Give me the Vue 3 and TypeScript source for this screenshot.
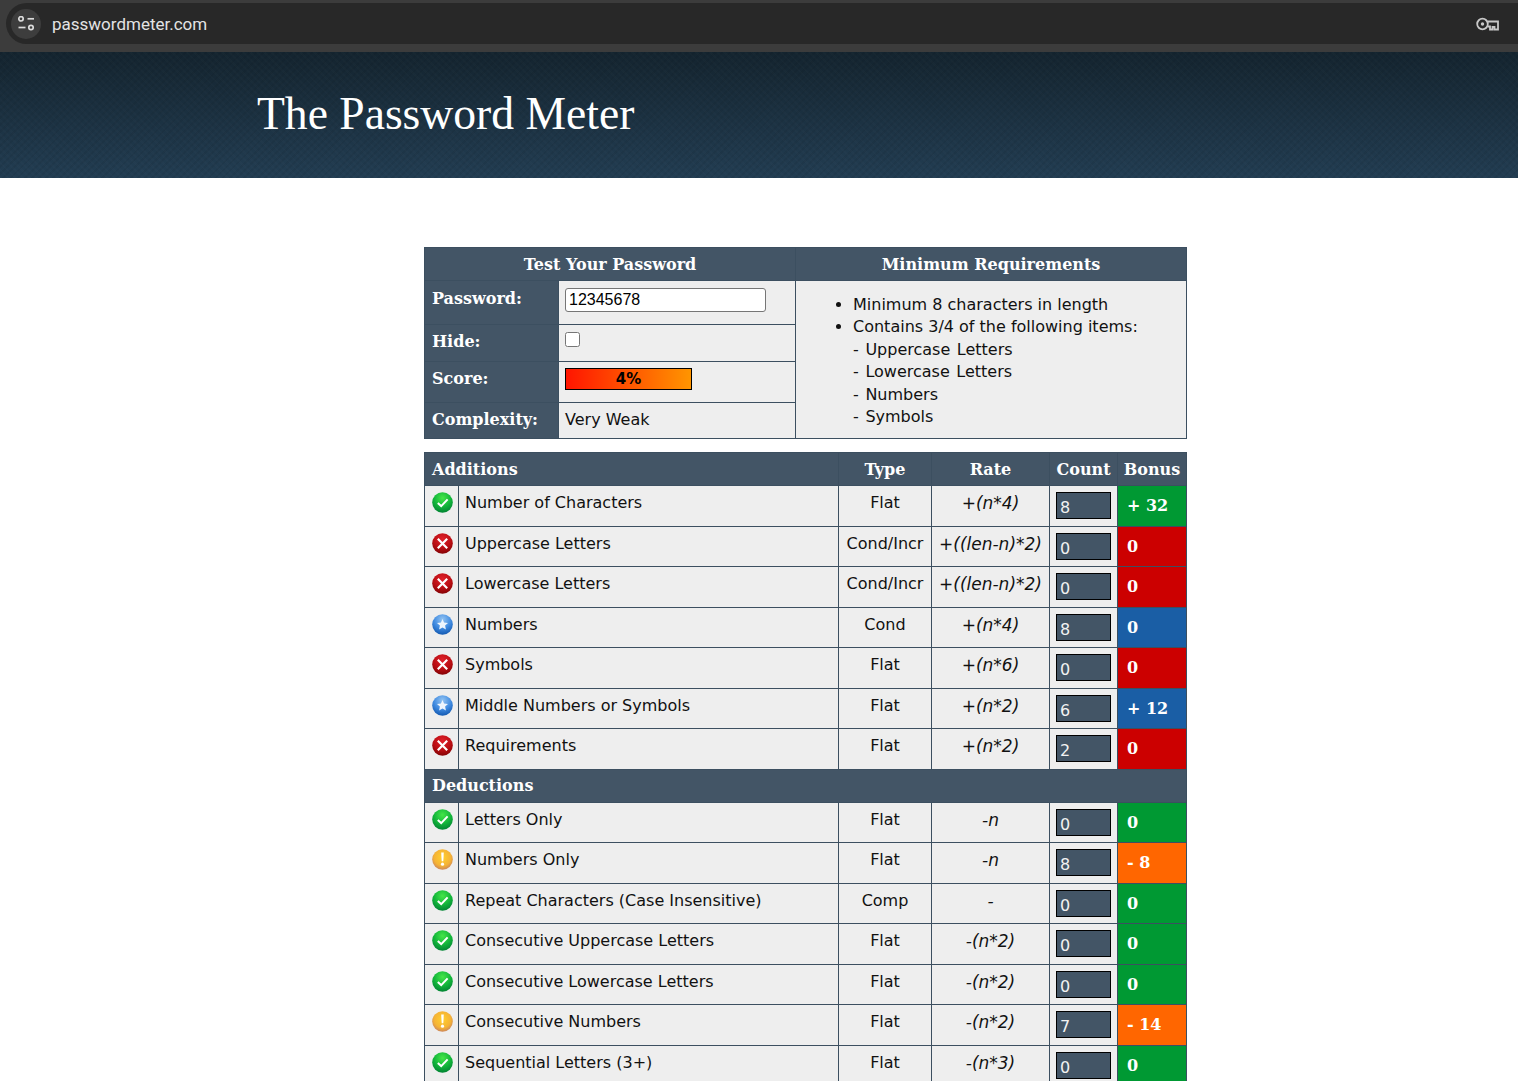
<script setup lang="ts">
type Status = 'pass' | 'fail' | 'warn' | 'star';
type Tone = 'green' | 'red' | 'blue' | 'orange';

interface Row {
  status: Status;
  name: string;
  type: string;
  rate: string;
  count: number;
  bonus: string;
  tone: Tone;
}

const additions: Row[] = [
  { status: 'pass', name: 'Number of Characters', type: 'Flat', rate: '+(n*4)', count: 8, bonus: '+ 32', tone: 'green' },
  { status: 'fail', name: 'Uppercase Letters', type: 'Cond/Incr', rate: '+((len-n)*2)', count: 0, bonus: '0', tone: 'red' },
  { status: 'fail', name: 'Lowercase Letters', type: 'Cond/Incr', rate: '+((len-n)*2)', count: 0, bonus: '0', tone: 'red' },
  { status: 'star', name: 'Numbers', type: 'Cond', rate: '+(n*4)', count: 8, bonus: '0', tone: 'blue' },
  { status: 'fail', name: 'Symbols', type: 'Flat', rate: '+(n*6)', count: 0, bonus: '0', tone: 'red' },
  { status: 'star', name: 'Middle Numbers or Symbols', type: 'Flat', rate: '+(n*2)', count: 6, bonus: '+ 12', tone: 'blue' },
  { status: 'fail', name: 'Requirements', type: 'Flat', rate: '+(n*2)', count: 2, bonus: '0', tone: 'red' },
];

const deductions: Row[] = [
  { status: 'pass', name: 'Letters Only', type: 'Flat', rate: '-n', count: 0, bonus: '0', tone: 'green' },
  { status: 'warn', name: 'Numbers Only', type: 'Flat', rate: '-n', count: 8, bonus: '- 8', tone: 'orange' },
  { status: 'pass', name: 'Repeat Characters (Case Insensitive)', type: 'Comp', rate: '-', count: 0, bonus: '0', tone: 'green' },
  { status: 'pass', name: 'Consecutive Uppercase Letters', type: 'Flat', rate: '-(n*2)', count: 0, bonus: '0', tone: 'green' },
  { status: 'pass', name: 'Consecutive Lowercase Letters', type: 'Flat', rate: '-(n*2)', count: 0, bonus: '0', tone: 'green' },
  { status: 'warn', name: 'Consecutive Numbers', type: 'Flat', rate: '-(n*2)', count: 7, bonus: '- 14', tone: 'orange' },
  { status: 'pass', name: 'Sequential Letters (3+)', type: 'Flat', rate: '-(n*3)', count: 0, bonus: '0', tone: 'green' },
];

const sections = [
  { title: 'Additions', rows: additions, head: true },
  { title: 'Deductions', rows: deductions, head: false },
];

const requirements = ['Uppercase Letters', 'Lowercase Letters', 'Numbers', 'Symbols'];
</script>

<template>
  <div class="page">
    <div class="browser-bar">
      <div class="omnibox">
        <span class="site-btn">
          <svg width="20" height="16" viewBox="0 0 20 16" fill="none" stroke="#dcdcdc" stroke-width="1.7">
            <circle cx="5" cy="2.8" r="2.2" />
            <path d="M11.5 2.8h6.5" />
            <path d="M2.5 11.5h7" />
            <circle cx="15" cy="11.5" r="2.2" />
          </svg>
        </span>
        <span class="url">passwordmeter.com</span>
        <svg class="key" width="24" height="14" viewBox="0 0 24 14" fill="none" stroke="#c8c8c8" stroke-width="1.8">
          <circle cx="7.5" cy="7" r="5.3" />
          <circle cx="7.5" cy="7" r="1.7" fill="#c8c8c8" stroke="none" />
          <path d="M12.5 4.5H23V12.5H19.5V10H17.5V12.5H15V9.5H12.5" />
        </svg>
      </div>
    </div>

    <header class="banner">
      <h1>The Password Meter</h1>
    </header>

    <main class="content">
      <table class="test-table">
        <colgroup>
          <col class="c-label" />
          <col class="c-field" />
          <col />
        </colgroup>
        <tbody>
          <tr class="head-row">
            <th colspan="2">Test Your Password</th>
            <th>Minimum Requirements</th>
          </tr>
          <tr class="r-pass">
            <th class="label">Password:</th>
            <td><input class="pass-input" type="text" value="12345678" /></td>
            <td class="req-cell" rowspan="4">
              <ul>
                <li>Minimum 8 characters in length</li>
                <li>Contains 3/4 of the following items:</li>
              </ul>
              <div v-for="item in requirements" :key="item" class="req-item">- {{ item }}</div>
            </td>
          </tr>
          <tr class="r-hide">
            <th class="label">Hide:</th>
            <td><input class="hide-box" type="checkbox" /></td>
          </tr>
          <tr class="r-score">
            <th class="label">Score:</th>
            <td><div class="score-bar">4%</div></td>
          </tr>
          <tr class="r-complexity">
            <th class="label">Complexity:</th>
            <td>Very Weak</td>
          </tr>
        </tbody>
      </table>

      <table class="score-table">
        <colgroup>
          <col class="c-icon" />
          <col />
          <col class="c-type" />
          <col class="c-rate" />
          <col class="c-count" />
          <col class="c-bonus" />
        </colgroup>
        <tbody v-for="section in sections" :key="section.title">
          <tr class="head-row">
            <th v-if="!section.head" colspan="6" class="left">{{ section.title }}</th>
            <template v-else>
              <th colspan="2" class="left">{{ section.title }}</th>
              <th>Type</th>
              <th>Rate</th>
              <th>Count</th>
              <th>Bonus</th>
            </template>
          </tr>
          <tr v-for="row in section.rows" :key="row.name" class="data-row">
            <td class="icon-cell">
              <svg class="status" width="21" height="21" viewBox="0 0 21 21">
                <defs>
                  <radialGradient id="g-pass" cx="50%" cy="28%" r="75%">
                    <stop offset="0" stop-color="#45e648" />
                    <stop offset="0.55" stop-color="#12b53a" />
                    <stop offset="1" stop-color="#017f33" />
                  </radialGradient>
                  <radialGradient id="g-fail" cx="50%" cy="28%" r="75%">
                    <stop offset="0" stop-color="#e0202a" />
                    <stop offset="0.6" stop-color="#b80d12" />
                    <stop offset="1" stop-color="#7e0204" />
                  </radialGradient>
                  <radialGradient id="g-warn" cx="50%" cy="40%" r="62%">
                    <stop offset="0" stop-color="#ffd02e" />
                    <stop offset="0.65" stop-color="#f5b335" />
                    <stop offset="1" stop-color="#c9825c" />
                  </radialGradient>
                  <radialGradient id="g-star" cx="50%" cy="25%" r="78%">
                    <stop offset="0" stop-color="#92c3f2" />
                    <stop offset="0.55" stop-color="#3f8ae0" />
                    <stop offset="1" stop-color="#0f55ad" />
                  </radialGradient>
                </defs>
                <circle cx="10.5" cy="10.5" r="10.3" :fill="`url(#g-${row.status})`" />
                <path v-if="row.status === 'pass'" d="M5.8 11l3.4 3.1L15.6 7.4" fill="none" stroke="#fff" stroke-width="2" />
                <path v-else-if="row.status === 'fail'" d="M5.8 5.8l9.4 9.4M15.2 5.8l-9.4 9.4" fill="none" stroke="#fff" stroke-width="2.2" />
                <template v-else-if="row.status === 'warn'">
                  <path d="M9.2 3.6h2.6l-.5 8.6H9.7z" fill="#fff" />
                  <circle cx="10.5" cy="15.2" r="1.6" fill="#fff" />
                </template>
                <path v-else d="M10.5 5l1.6 3.6 3.9.4-2.9 2.6.8 3.9-3.4-2-3.4 2 .8-3.9L5 9l3.9-.4z" fill="#eef5fd" />
              </svg>
            </td>
            <td class="name-cell">{{ row.name }}</td>
            <td class="center">{{ row.type }}</td>
            <td class="center rate">{{ row.rate }}</td>
            <td class="count-cell"><input class="count" type="text" readonly :value="row.count" /></td>
            <td class="bonus" :class="row.tone">{{ row.bonus }}</td>
          </tr>
        </tbody>
      </table>
    </main>
  </div>
</template>

<style>
html,
body {
  margin: 0;
  height: 100%;
  overflow: hidden;
  background: #fff;
}
</style>

<style scoped>
.page {
  height: 1081px;
  overflow: hidden;
  font-family: "DejaVu Sans", Verdana, sans-serif;
  font-size: 16px;
  color: #111;
}

.browser-bar {
  height: 52px;
  box-sizing: border-box;
  padding-top: 3px;
  background: #3c3c3c;
}

.omnibox {
  height: 41px;
  margin-left: 6px;
  padding: 0 19px 0 5px;
  display: flex;
  align-items: center;
  background: #282828;
  border-radius: 21px 0 0 21px;
}

.site-btn {
  width: 30px;
  height: 30px;
  border-radius: 50%;
  background: #3d3d3d;
  display: flex;
  align-items: center;
  justify-content: center;
}

.url {
  margin-left: 11px;
  font-family: Roboto, "Liberation Sans", sans-serif;
  font-size: 17px;
  color: #e3e3e3;
}

.key {
  margin-left: auto;
}

.banner {
  height: 126px;
  box-sizing: border-box;
  padding: 36px 0 0 257px;
  background:
    repeating-linear-gradient(45deg, rgba(255, 255, 255, 0.012) 0 2px, transparent 2px 5px),
    repeating-linear-gradient(-45deg, rgba(0, 0, 0, 0.05) 0 2px, transparent 2px 5px),
    linear-gradient(#14242f, #223d52);
}

.banner h1 {
  margin: 0;
  font-family: "Liberation Serif", serif;
  font-weight: 400;
  font-size: 45.6px;
  line-height: 52px;
  color: #fff;
}

.content {
  width: 763px;
  margin: 69px 0 0 424px;
}

table {
  width: 763px;
  table-layout: fixed;
  border-collapse: collapse;
  border-spacing: 0;
}

.score-table {
  margin-top: 13px;
}

th,
td {
  box-sizing: border-box;
  padding: 0;
  border: 1px solid #3c4f60;
  vertical-align: top;
  background: #eeeeee;
}

th {
  font-family: "DejaVu Serif", serif;
  font-size: 16px;
  font-weight: 700;
  color: #fff;
  background: #435566;
}

.head-row th {
  height: 33px;
  vertical-align: middle;
  text-align: center;
}

.head-row th.left {
  text-align: left;
  padding-left: 7px;
}

.label {
  text-align: left;
  padding: 7px 0 0 7px;
}

.test-table td {
  padding: 7px 6px 0;
}

.c-label {
  width: 134px;
}

.c-field {
  width: 237px;
}

.r-pass th,
.r-pass td {
  height: 44px;
}

.r-pass th {
  padding-top: 8px;
}

.r-hide th,
.r-hide td {
  height: 37px;
}

.r-score th,
.r-score td {
  height: 41px;
}

.test-table .r-score td {
  padding-top: 6px;
}

.r-complexity th,
.r-complexity td {
  height: 36px;
}

.pass-input {
  display: block;
  box-sizing: border-box;
  width: 201px;
  height: 24px;
  padding: 1px 3px;
  border: 1px solid #767676;
  border-radius: 3px;
  font-family: "Liberation Sans", Arial, sans-serif;
  font-size: 16px;
  color: #000;
  background: #fff;
}

.hide-box {
  display: block;
  width: 15px;
  height: 15px;
  margin: 0;
}

.score-bar {
  box-sizing: border-box;
  width: 127px;
  height: 22px;
  border: 1px solid #000;
  background: linear-gradient(90deg, #ff1500, #ff9500);
  font-size: 15px;
  font-weight: 700;
  line-height: 20px;
  text-align: center;
  color: #000;
}

.test-table td.req-cell {
  padding: 13px 0 0 57px;
  line-height: 22.4px;
}

ul {
  margin: 0;
  padding: 0;
}

.req-item {
  word-spacing: 1.5px;
}

.c-icon {
  width: 34px;
}

.c-type {
  width: 93px;
}

.c-rate {
  width: 118px;
}

.c-count {
  width: 68px;
}

.c-bonus {
  width: 69px;
}

.data-row td {
  height: 40.5px;
}

.icon-cell {
  padding: 6px 0 0 7px;
}

.status {
  display: block;
}

.name-cell {
  padding: 7px 0 0 6px;
}

.center {
  padding-top: 7px;
  text-align: center;
}

.rate {
  font-size: 17px;
  font-style: italic;
}

.count-cell {
  padding: 6px 0 0 6px;
}

.count {
  display: block;
  box-sizing: border-box;
  width: 55px;
  height: 27px;
  padding: 4px 3px 0;
  border: 1px solid #000;
  border-radius: 0;
  outline: none;
  font-family: "DejaVu Sans", sans-serif;
  font-size: 16px;
  color: #f2f2f2;
  background: #435566;
}

td.bonus {
  padding: 10px 0 0 9px;
  font-family: "DejaVu Serif", serif;
  font-size: 16px;
  font-weight: 700;
  color: #fff;
}

td.green {
  background: #009933;
}

td.red {
  background: #cc0000;
}

td.blue {
  background: #1a5ea5;
}

td.orange {
  background: #ff6600;
}
</style>
